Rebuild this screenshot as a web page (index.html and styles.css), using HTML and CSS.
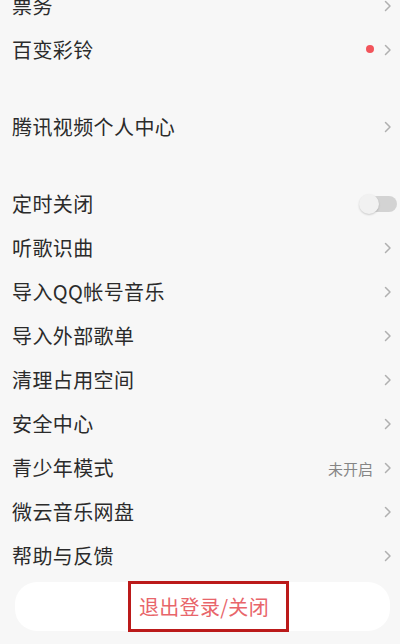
FILE: index.html
```html
<!DOCTYPE html>
<html lang="zh">
<head>
<meta charset="utf-8">
<link rel="stylesheet" href="styles.css">
</head>
<body>
<div class="page">
  <div class="group">
    <div class="row"><span class="label">票务</span><span class="chev"><svg viewBox="0 0 8 12" width="8" height="12"><path d="M1.5 1.5 L6 6 L1.5 10.5" fill="none" stroke="#b0b0b0" stroke-width="1.5" stroke-linecap="round" stroke-linejoin="round"/></svg></span></div>
    <div class="row"><span class="label">百变彩铃</span><span class="dot"></span><span class="chev"><svg viewBox="0 0 8 12" width="8" height="12"><path d="M1.5 1.5 L6 6 L1.5 10.5" fill="none" stroke="#b0b0b0" stroke-width="1.5" stroke-linecap="round" stroke-linejoin="round"/></svg></span></div>
  </div>
  <div class="group">
    <div class="row"><span class="label">腾讯视频个人中心</span><span class="chev"><svg viewBox="0 0 8 12" width="8" height="12"><path d="M1.5 1.5 L6 6 L1.5 10.5" fill="none" stroke="#b0b0b0" stroke-width="1.5" stroke-linecap="round" stroke-linejoin="round"/></svg></span></div>
  </div>
  <div class="group">
    <div class="row"><span class="label">定时关闭</span><span class="switch"><span class="knob"></span></span></div>
    <div class="row"><span class="label">听歌识曲</span><span class="chev"><svg viewBox="0 0 8 12" width="8" height="12"><path d="M1.5 1.5 L6 6 L1.5 10.5" fill="none" stroke="#b0b0b0" stroke-width="1.5" stroke-linecap="round" stroke-linejoin="round"/></svg></span></div>
    <div class="row"><span class="label">导入QQ帐号音乐</span><span class="chev"><svg viewBox="0 0 8 12" width="8" height="12"><path d="M1.5 1.5 L6 6 L1.5 10.5" fill="none" stroke="#b0b0b0" stroke-width="1.5" stroke-linecap="round" stroke-linejoin="round"/></svg></span></div>
    <div class="row"><span class="label">导入外部歌单</span><span class="chev"><svg viewBox="0 0 8 12" width="8" height="12"><path d="M1.5 1.5 L6 6 L1.5 10.5" fill="none" stroke="#b0b0b0" stroke-width="1.5" stroke-linecap="round" stroke-linejoin="round"/></svg></span></div>
    <div class="row"><span class="label">清理占用空间</span><span class="chev"><svg viewBox="0 0 8 12" width="8" height="12"><path d="M1.5 1.5 L6 6 L1.5 10.5" fill="none" stroke="#b0b0b0" stroke-width="1.5" stroke-linecap="round" stroke-linejoin="round"/></svg></span></div>
    <div class="row"><span class="label">安全中心</span><span class="chev"><svg viewBox="0 0 8 12" width="8" height="12"><path d="M1.5 1.5 L6 6 L1.5 10.5" fill="none" stroke="#b0b0b0" stroke-width="1.5" stroke-linecap="round" stroke-linejoin="round"/></svg></span></div>
    <div class="row"><span class="label">青少年模式</span><span class="value">未开启</span><span class="chev"><svg viewBox="0 0 8 12" width="8" height="12"><path d="M1.5 1.5 L6 6 L1.5 10.5" fill="none" stroke="#b0b0b0" stroke-width="1.5" stroke-linecap="round" stroke-linejoin="round"/></svg></span></div>
    <div class="row"><span class="label">微云音乐网盘</span><span class="chev"><svg viewBox="0 0 8 12" width="8" height="12"><path d="M1.5 1.5 L6 6 L1.5 10.5" fill="none" stroke="#b0b0b0" stroke-width="1.5" stroke-linecap="round" stroke-linejoin="round"/></svg></span></div>
    <div class="row"><span class="label">帮助与反馈</span><span class="chev"><svg viewBox="0 0 8 12" width="8" height="12"><path d="M1.5 1.5 L6 6 L1.5 10.5" fill="none" stroke="#b0b0b0" stroke-width="1.5" stroke-linecap="round" stroke-linejoin="round"/></svg></span></div>
  </div>
  <div class="logout">
    <span class="logout-text">退出登录/关闭</span>
  </div>
</div>
</body>
</html>
```
FILE: styles.css
```css
html, body {
  margin: 0;
  padding: 0;
  background: #f7f7f7;
}
body {
  width: 400px;
  height: 644px;
  overflow: hidden;
  font-family: "Noto Sans CJK SC", "Noto Sans", sans-serif;
  color: #2b2b2b;
}
.page {
  margin-top: -16px;
  display: flex;
  flex-direction: column;
}
.group {
  display: flex;
  flex-direction: column;
}
.group + .group {
  margin-top: 33px;
}
.row {
  height: 44px;
  display: flex;
  align-items: center;
  padding: 0 8px 0 12px;
}
.label {
  flex: 1;
  font-size: 20px;
  line-height: 24px;
  letter-spacing: 0.4px;
}
.chev {
  width: 8px;
  height: 12px;
  display: flex;
}
.dot {
  width: 8px;
  height: 8px;
  border-radius: 50%;
  background: #f2545b;
  margin-right: 10px;
  margin-top: -2px;
}
.value {
  font-size: 15px;
  color: #858585;
  margin-right: 11px;
}
.switch {
  width: 28px;
  height: 16px;
  border-radius: 8px;
  background: #d3d3d3;
  margin-right: -5px;
  display: flex;
  align-items: center;
  position: relative;
}
.knob {
  position: absolute;
  left: -10px;
  width: 20px;
  height: 20px;
  border-radius: 50%;
  background: #f1f1f1;
  box-shadow: 0 1px 2px rgba(0,0,0,0.18);
}
.logout {
  margin: 4px 10px 0 15px;
  height: 49px;
  background: #ffffff;
  border-radius: 22px;
  display: flex;
  justify-content: center;
  align-items: center;
  padding-left: 12px;
}
.logout-text {
  box-sizing: border-box;
  height: 51px;
  border: 3px solid #bb1a1a;
  padding: 0 17px 0 8px;
  display: flex;
  align-items: center;
  font-size: 20px;
  color: #e8656a;
  letter-spacing: 0.3px;
}
```
